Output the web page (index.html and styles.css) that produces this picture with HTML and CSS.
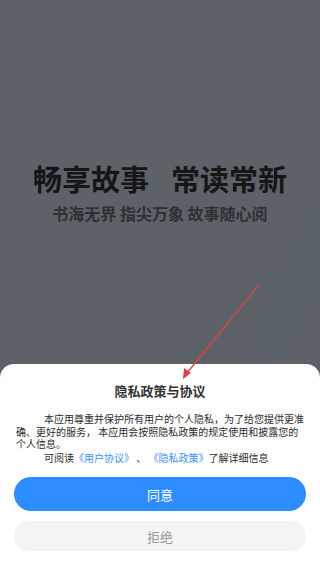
FILE: index.html
```html
<!doctype html>
<html>
    <head>
        <meta charset="utf-8">
        <title>隐私政策与协议</title>
        <link rel="stylesheet" href="styles.css">
    </head>
    <body>
        <div class="page">
            <div class="hero">
                <h1 class="slogan"><span>畅享故事</span><span>常读常新</span></h1>
                <p class="sub">书海无界 指尖万象 故事随心阅</p>
            </div>
            <div class="sheet">
                <h2 class="sheet-title">隐私政策与协议</h2>
                <p class="desc">本应用尊重并保护所有用户的个人隐私，为了给您提供更准确、更好的服务， 本应用会按照隐私政策的规定使用和披露您的个人信息。</p>
                <p class="desc more">可阅读<a href="#">《用户协议》</a> 、 <a href="#">《隐私政策》</a>了解详细信息</p>
                <button class="btn agree">同意</button>
                <button class="btn refuse">拒绝</button>
            </div>
            <!-- pointer drawn over the page -->
            <svg class="arrow" width="320" height="568" viewBox="0 0 320 568">
                <line x1="258" y1="286" x2="187" y2="373" stroke="#e0413f" stroke-width="1.3"/>
                <polygon points="183,379 184,368 191,373" fill="#e0413f"/>
            </svg>
        </div>
    </body>
</html>
```

FILE: styles.css
```css
* {
    margin: 0;
    padding: 0;
    box-sizing: border-box;
}
body {
    background: #5d6168;
    font-family: "Noto Sans CJK SC", "Noto Sans", sans-serif;
    color: #333;
}
.page {
    position: relative;
    width: 320px;
    height: 568px;
    display: flex;
    flex-direction: column;
    background: linear-gradient(115deg, #5d6168 60%, #5c6269 75%, #616367 100%);
    overflow: hidden;
}
.hero {
    flex: 1;
    padding-top: 158px;
    text-align: center;
}
.slogan {
    font-size: 29px;
    line-height: 40px;
    font-weight: 700;
    color: #151617;
    display: flex;
    justify-content: center;
    gap: 22px;
}
.sub {
    margin-top: 5px;
    font-size: 16px;
    line-height: 20px;
    font-weight: 700;
    color: #2e3034;
}
.sheet {
    background: #fff;
    border-radius: 14px 14px 0 0;
    padding: 17px 14px 17px;
}
.sheet-title {
    font-size: 13px;
    line-height: 20px;
    font-weight: 700;
    text-align: center;
    color: #333;
    margin-bottom: 12px;
}
.desc {
    font-size: 10px;
    line-height: 12.5px;
    text-indent: 28px;
    padding: 0 2px;
    color: #2b2b2b;
}
.desc.more {
    margin-top: 1px;
}
.desc a {
    display: inline-block;
    text-indent: 0;
    color: #3b8ff2;
    text-decoration: none;
}
.btn {
    display: block;
    width: 100%;
    border: none;
    font-family: inherit;
    font-size: 13px;
}
.agree {
    margin-top: 13px;
    height: 34px;
    border-radius: 17px;
    background: #2d8cff;
    color: #fff;
}
.refuse {
    margin-top: 10px;
    height: 30px;
    border-radius: 15px;
    background: #f4f4f4;
    color: #999;
}
.arrow {
    position: absolute;
    left: 0;
    top: 0;
    pointer-events: none;
}
```
